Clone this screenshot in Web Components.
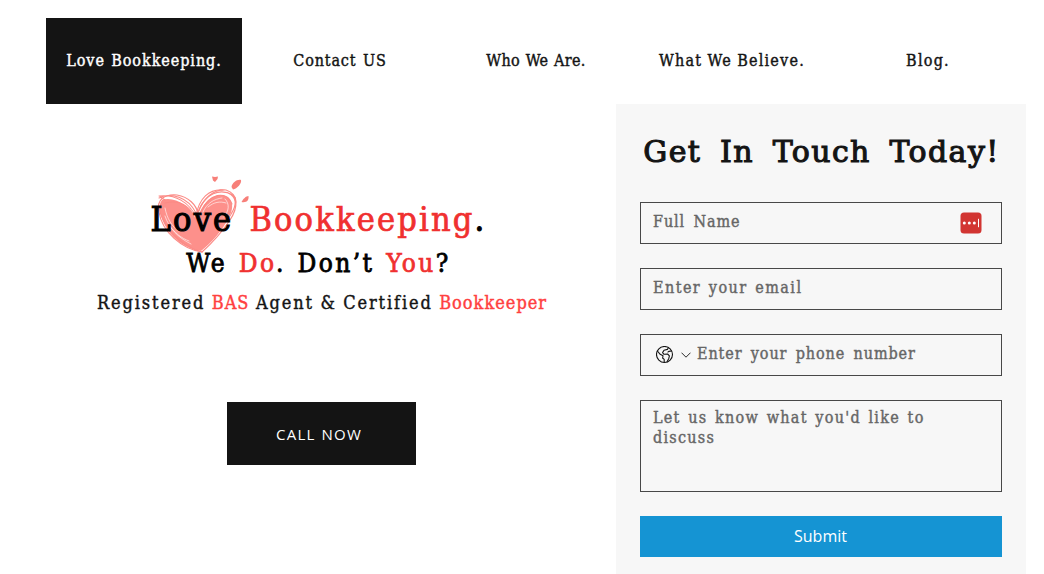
<!DOCTYPE html>
<html lang="en">
<head>
<meta charset="utf-8">
<title>Love Bookkeeping.</title>
<style>
  body {
    margin: 0;
    background: #fff;
    color: #141414;
    font-family: "DejaVu Serif Condensed", "DejaVu Serif", serif;
    font-size: 16px;
    overflow: hidden;
  }
</style>
</head>
<body>
<love-page>
  <nav-bar slot="nav">
    <nav-item active style="letter-spacing: 0.94px; word-spacing: 0.9px">Love Bookkeeping.</nav-item>
    <nav-item style="letter-spacing: 0.85px; word-spacing: 1.2px">Contact US</nav-item>
    <nav-item style="letter-spacing: 0.3px; word-spacing: 0.9px">Who We Are.</nav-item>
    <nav-item style="letter-spacing: 1.2px; word-spacing: -0.5px">What We Believe.</nav-item>
    <nav-item style="letter-spacing: 1.24px">Blog.</nav-item>
  </nav-bar>
  <hero-panel>
    <brand-logo></brand-logo>
    <span slot="tagline">Registered <b>BAS</b> Agent &amp; Certified <b>Bookkeeper</b></span>
    <span slot="action">CALL NOW</span>
  </hero-panel>
  <contact-form>
    <span slot="title">Get In Touch Today!</span>
    <form-field style="letter-spacing: 0.9px; word-spacing: 3px">Full Name<autofill-badge slot="end"></autofill-badge></form-field>
    <form-field style="letter-spacing: 1.44px; word-spacing: 1.7px">Enter your email</form-field>
    <form-field style="letter-spacing: 0.9px; word-spacing: 2.9px"><country-picker slot="start"></country-picker>Enter your phone number</form-field>
    <form-field multiline style="letter-spacing: 1.26px; word-spacing: 1.8px">Let us know what you'd like to discuss</form-field>
    <span slot="submit">Submit</span>
  </contact-form>
</love-page>

<script>
class LovePage extends HTMLElement {
    constructor() {
        super();
        this.attachShadow({ mode: 'open' });
        this.shadowRoot.innerHTML = `
      <style>
        :host {
          display: block;
          width: 980px;
          height: 574px;
          box-sizing: border-box;
          margin-left: 46px;
          padding-top: 18px;
        }
        main {
          display: grid;
          grid-template-columns: 551px 410px;
          justify-content: space-between;
          height: 470px;
        }
      </style>
      <slot name="nav"></slot>
      <main><slot></slot></main>
    `;
    }
}

class NavBar extends HTMLElement {
    constructor() {
        super();
        this.attachShadow({ mode: 'open' });
        this.shadowRoot.innerHTML = `
      <style>
        :host {
          display: block;
        }
        nav {
          display: grid;
          grid-template-columns: repeat(5, 1fr);
          height: 86px;
        }
      </style>
      <nav><slot></slot></nav>
    `;
    }
}

class NavItem extends HTMLElement {
    constructor() {
        super();
        this.attachShadow({ mode: 'open' });
        this.shadowRoot.innerHTML = `
      <style>
        :host {
          display: flex;
          align-items: center;
          justify-content: center;
          padding-bottom: 2px;
          box-sizing: border-box;
          white-space: nowrap;
          cursor: pointer;
          -webkit-text-stroke: 0.4px;
        }
        :host([active]) {
          background: #141414;
          color: #fff;
        }
      </style>
      <span><slot></slot></span>
    `;
    }
}

class HeroPanel extends HTMLElement {
    constructor() {
        super();
        this.attachShadow({ mode: 'open' });
        this.shadowRoot.innerHTML = `
      <style>
        :host {
          display: flex;
          flex-direction: column;
          align-items: center;
          padding-top: 93px;
        }
        .tagline {
          font-size: 18px;
          line-height: 35px;
          letter-spacing: 1.9px;
          word-spacing: -0.6px;
          white-space: nowrap;
          padding-left: 1px;
          -webkit-text-stroke: 0.4px;
        }
        button {
          width: 189px;
          height: 63px;
          margin-top: 82px;
          padding: 0 5px 0 0;
          border: 0;
          background: #141414;
          color: #fff;
          font: 15px/20px "Open Sans", sans-serif;
          letter-spacing: 1.21px;
          word-spacing: 0.95px;
        }
      </style>
      <slot></slot>
      <div class="tagline"><slot name="tagline"></slot></div>
      <button><slot name="action"></slot></button>
    `;
    }

    connectedCallback() {
        // nested <b> sits in the light tree, so ::slotted cannot reach it
        this.querySelectorAll('[slot=tagline] b').forEach(b => {
            b.style.fontWeight = 'normal';
            b.style.letterSpacing = '1px';
            b.style.color = '#ff4040';
        });
    }
}

class BrandLogo extends HTMLElement {
    constructor() {
        super();
        this.attachShadow({ mode: 'open' });
        this.shadowRoot.innerHTML = `
      <style>
        :host {
          display: block;
          position: relative;
          width: 340px;
          margin-right: 6px;
          color: #000;
          text-align: center;
          white-space: nowrap;
          line-height: 44px;
        }
        svg {
          position: absolute;
          left: 2px;
          top: -23px;
          width: 100px;
          height: 84px;
        }
        div {
          position: relative;
        }
        .name {
          font-size: 34px;
          letter-spacing: 2.18px;
          word-spacing: 4.1px;
          -webkit-text-stroke: 1.1px;
        }
        .motto {
          font-size: 26px;
          letter-spacing: 2.4px;
          word-spacing: 2px;
          -webkit-text-stroke: 0.8px;
        }
        em {
          font-style: normal;
          color: #f03030;
          -webkit-text-stroke-width: 0.7px;
        }
      </style>
      <svg viewBox="150 174 100 84" fill="none" stroke="#fb8a85" stroke-linecap="round">
        <path fill="#fd908b" stroke="none" d="M200 251C186 249 173 240 166 229C159 217 156 206 161 200C173 196 188 205 196 219C201 203 211 194 222 195C233 197 233 209 228 217C222 230 210 243 200 251Z"/>
        <path stroke-width="1.2" d="M201 252C181 249 161 232 158 212C155 199 164 194 176 195C188 197 195 205 197 213C202 198 213 189 225 190C238 194 237 208 229 220C221 232 210 244 201 252"/>
        <path stroke-width="1.1" d="M158 198C170 192 187 197 195 213M158 196C174 194 188 202 195 217M164 203C180 199 190 207 196 220M195 216C198 198 208 189 222 190M197 212C204 193 219 188 232 195C239 201 231 214 224 223M200 212C208 193 225 190 231 204M159 197L164 200M158 208C162 227 179 246 201 252M227 193C236 197 236 205 230 214"/>
        <path stroke="#fff" stroke-width="0.8" opacity="0.75" d="M164 216C168 228 176 237 190 244M168 225C174 233 180 238 188 241M202 212C206 203 213 199 221 198M207 207C213 202 219 201 225 203M224 199C229 204 228 211 223 217M164 208C166 219 171 226 177 231M180 202C188 206 192 211 194 217"/>
        <g fill="#f77f79" stroke="none">
          <path d="M211 176.5L214 177L217 176.5L216.5 179L214 182L212 180.5Z"/>
          <path d="M230.5 187C231 183 236 179 240 180C241 183 236 189 232 189.5Z"/>
          <path d="M240.5 202C242 199 245 196 247.5 196C248 200 246 203 240.5 202Z"/>
        </g>
      </svg>
      <div class="name">Love <em>Bookkeeping</em>.</div>
      <div class="motto">We <em>Do</em>. Don’t <em>You</em>?</div>
    `;
    }
}

class ContactForm extends HTMLElement {
    constructor() {
        super();
        this.attachShadow({ mode: 'open' });
        this.shadowRoot.innerHTML = `
      <style>
        :host {
          display: block;
          box-sizing: border-box;
          padding: 28px 24px 0;
          background: #f7f7f7;
        }
        h2 {
          margin: 0 -20px 30px;
          font: 30px/40px "DejaVu Serif", serif;
          letter-spacing: 1.39px;
          word-spacing: 7.8px;
          text-align: center;
          padding-left: 1px;
          white-space: nowrap;
          -webkit-text-stroke: 1.1px;
        }
        form {
          display: flex;
          flex-direction: column;
          gap: 24px;
        }
        button {
          height: 41px;
          padding: 0 1px 2px 0;
          border: 0;
          background: #1594d3;
          color: #fff;
          font: 16px/24px "Open Sans", sans-serif;
        }
      </style>
      <h2><slot name="title"></slot></h2>
      <form>
        <slot></slot>
        <button type="button"><slot name="submit"></slot></button>
      </form>
    `;
    }
}

class FormField extends HTMLElement {
    constructor() {
        super();
        this.attachShadow({ mode: 'open' });
        this.shadowRoot.innerHTML = `
      <style>
        :host {
          display: flex;
          align-items: center;
          box-sizing: border-box;
          height: 42px;
          padding: 0 12px;
          border: 1px solid #484848;
          color: #666;
          line-height: 20px;
          cursor: text;
          -webkit-text-stroke: 0.4px;
        }
        :host([multiline]) {
          height: 92px;
          align-items: flex-start;
          padding-top: 7px;
          padding-right: 50px;
        }
        .hint {
          flex: 1;
          padding-bottom: 3px;
        }
      </style>
      <slot name="start"></slot>
      <span class="hint"><slot></slot></span>
      <slot name="end"></slot>
    `;
    }
}

class CountryPicker extends HTMLElement {
    constructor() {
        super();
        this.attachShadow({ mode: 'open' });
        this.shadowRoot.innerHTML = `
      <style>
        :host {
          display: flex;
          align-items: center;
          gap: 7px;
          margin: 0 6px 0 3px;
        }
        svg {
          display: block;
          fill: none;
          stroke: #141414;
        }
      </style>
      <svg width="18" height="18" viewBox="0 0 18 18" stroke-width="1.1" stroke-linejoin="round">
        <circle cx="8.5" cy="8.5" r="8"/>
        <path d="M1.4 5L4.2 8.3L7 9.8L6.6 12L8.2 13.4V16.4"/>
        <path d="M12.4 1.6L11.4 3.4L8 4.2L6.6 6.6L8 8.3L11.6 8L13.4 9.8L12.8 12.4L10.9 15.9"/>
        <path d="M15.7 5L12.8 5.4L11.6 6.4"/>
      </svg>
      <svg width="10" height="6" viewBox="0 0 10 6" stroke-width="0.9">
        <path d="M0.5 0.7L5 5.2L9.5 0.7"/>
      </svg>
    `;
    }
}

class AutofillBadge extends HTMLElement {
    constructor() {
        super();
        this.attachShadow({ mode: 'open' });
        this.shadowRoot.innerHTML = `
      <style>
        :host {
          display: block;
          margin-right: 7px;
        }
        svg {
          display: block;
        }
      </style>
      <svg width="22" height="22" viewBox="0 0 22 22">
        <rect x="0.5" y="0.5" width="21" height="21" rx="3.5" fill="#d23532"/>
        <g fill="#fff">
          <circle cx="4.3" cy="11" r="1.5"/>
          <circle cx="9.3" cy="11" r="1.5"/>
          <circle cx="14.3" cy="11" r="1.5"/>
          <rect x="18" y="6.8" width="1" height="8.4"/>
        </g>
      </svg>
    `;
    }
}

customElements.define('love-page', LovePage);
customElements.define('nav-bar', NavBar);
customElements.define('nav-item', NavItem);
customElements.define('hero-panel', HeroPanel);
customElements.define('brand-logo', BrandLogo);
customElements.define('contact-form', ContactForm);
customElements.define('form-field', FormField);
customElements.define('country-picker', CountryPicker);
customElements.define('autofill-badge', AutofillBadge);
</script>
</body>
</html>
